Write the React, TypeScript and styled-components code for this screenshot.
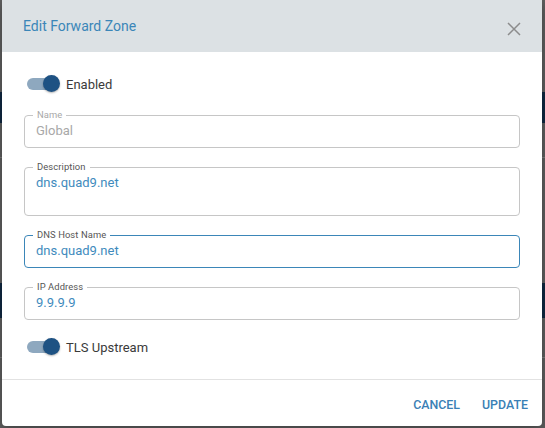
import styled, {createGlobalStyle} from 'styled-components';

const GlobalStyle = createGlobalStyle`
  html, body {
    margin: 0;
    padding: 0;
  }
  body {
    width: 545px;
    height: 428px;
    overflow: hidden;
    font-family: Roboto, 'Liberation Sans', sans-serif;
    background:
      linear-gradient(to bottom,
        #5e5e5e 0, #5e5e5e 92px,
        #0f2740 92px, #0f2740 123px,
        #5e5e5e 123px, #5e5e5e 157px,
        #7a7a7a 157px, #7a7a7a 158px,
        #5e5e5e 158px, #5e5e5e 283px,
        #0f2740 283px, #0f2740 318px,
        #5e5e5e 318px, #5e5e5e 357px,
        #7a7a7a 357px, #7a7a7a 358px,
        #5e5e5e 358px);
  }
`;

const Page = styled.div`
  padding: 0 3px 2px 2px;
`;

const Dialog = styled.div`
  display: flex;
  flex-direction: column;
  width: 540px;
  height: 426px;
  background: #fff;
  border-radius: 0 0 4px 4px;
  overflow: hidden;
  box-shadow: 0 4px 12px rgba(0, 0, 0, 0.3);
`;

const Header = styled.div`
  display: flex;
  align-items: center;
  justify-content: space-between;
  height: 53px;
  padding: 0 21px 0 21px;
  background: #dce1e4;
  box-sizing: border-box;
`;

const Title = styled.h2`
  margin: 0;
  font-size: 14px;
  font-weight: 400;
  color: #3b86b8;
`;

const CloseButton = styled.button`
  display: flex;
  padding: 0;
  margin-top: 5px;
  border: none;
  background: none;
  cursor: pointer;
`;

const Body = styled.div`
  display: flex;
  flex-direction: column;
  padding: 21px 22px 21px 22px;
  flex: 1;
`;

const ToggleRow = styled.label<{gapBelow: number}>`
  display: flex;
  align-items: center;
  height: 22px;
  margin-bottom: ${({gapBelow}) => gapBelow}px;
  padding-left: 3px;
  font-size: 13px;
  color: #3a3a3a;
`;

const Track = styled.span`
  position: relative;
  display: inline-block;
  width: 27px;
  height: 12px;
  border-radius: 6px;
  background: #8ea8bf;
  margin-right: 12px;
`;

const Thumb = styled.span`
  position: absolute;
  left: 16px;
  top: -3px;
  width: 17px;
  height: 17px;
  border-radius: 50%;
  background: #1e5283;
  box-shadow: 0 1px 2px rgba(0, 0, 0, 0.3);
`;

const Fields = styled.div`
  display: flex;
  flex-direction: column;
  gap: 13px;
  margin-bottom: 16px;
`;

const Field = styled.fieldset<{focused?: boolean}>`
  margin: 0;
  padding: 0 11px 6px 8px;
  border: 1px solid ${({focused}) => (focused ? '#3b86b8' : '#c6c6c6')};
  border-radius: 4px;
  min-width: 0;
`;

const Legend = styled.legend<{disabled?: boolean}>`
  padding: 0 4px;
  font-size: 9.4px;
  line-height: 12px;
  letter-spacing: 0.1px;
  color: ${({disabled}) => (disabled ? '#a8a8a8' : '#555')};
`;

const Value = styled.div<{disabled?: boolean; rows?: number}>`
  height: ${({rows}) => (rows || 1) * 20 - (rows && rows > 1 ? 4 : 0)}px;
  padding-left: 3px;
  font-size: 13px;
  line-height: 20px;
  color: ${({disabled}) => (disabled ? '#a8a8a8' : '#3f8bbd')};
`;

const Footer = styled.div`
  display: flex;
  justify-content: flex-end;
  align-items: center;
  gap: 22px;
  height: 47px;
  padding: 2px 14px 0 0;
  border-top: 1px solid #e2e2e2;
  box-sizing: border-box;
`;

const ActionButton = styled.button`
  padding: 0;
  border: none;
  background: none;
  font-family: Roboto, 'Liberation Sans', sans-serif;
  font-size: 12.4px;
  font-weight: 500;
  text-transform: uppercase;
  color: #3a80b5;
  cursor: pointer;
`;

const Toggle = ({label, gapBelow}: {label: string; gapBelow: number}) => (
  <ToggleRow gapBelow={gapBelow}>
    <Track>
      <Thumb />
    </Track>
    {label}
  </ToggleRow>
);

const fields = [
  {label: 'Name', value: 'Global', disabled: true},
  {label: 'Description', value: 'dns.quad9.net', rows: 2},
  {label: 'DNS Host Name', value: 'dns.quad9.net', focused: true},
  {label: 'IP Address', value: '9.9.9.9'},
];

export default function App() {
  return (
    <Page>
      <GlobalStyle />
      <Dialog>
        <Header>
          <Title>Edit Forward Zone</Title>
          <CloseButton aria-label='close'>
            <svg width='14' height='14' viewBox='0 0 14 14'>
              <path d='M1 1L13 13M13 1L1 13' stroke='#8c8c8c' strokeWidth='1.5' />
            </svg>
          </CloseButton>
        </Header>
        <Body>
          <Toggle label='Enabled' gapBelow={14} />
          <Fields>
            {fields.map((f) => (
              <Field key={f.label} focused={f.focused}>
                <Legend disabled={f.disabled}>{f.label}</Legend>
                <Value disabled={f.disabled} rows={f.rows}>
                  {f.value}
                </Value>
              </Field>
            ))}
          </Fields>
          <Toggle label='TLS Upstream' gapBelow={0} />
        </Body>
        <Footer>
          <ActionButton>Cancel</ActionButton>
          <ActionButton>Update</ActionButton>
        </Footer>
      </Dialog>
    </Page>
  );
}
